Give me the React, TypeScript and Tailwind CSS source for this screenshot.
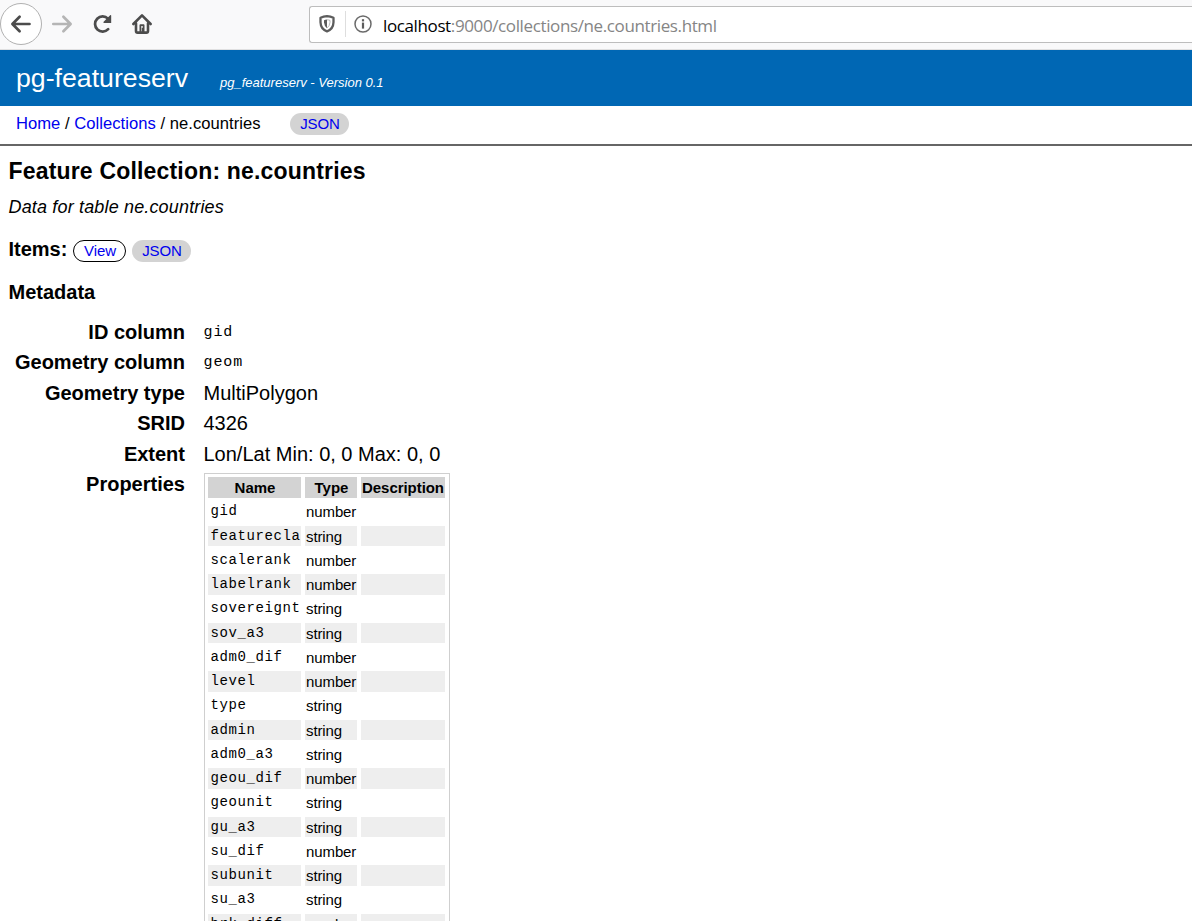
import React from 'react';

const properties: [string, string][] = [
  ['gid', 'number'],
  ['featurecla', 'string'],
  ['scalerank', 'number'],
  ['labelrank', 'number'],
  ['sovereignt', 'string'],
  ['sov_a3', 'string'],
  ['adm0_dif', 'number'],
  ['level', 'number'],
  ['type', 'string'],
  ['admin', 'string'],
  ['adm0_a3', 'string'],
  ['geou_dif', 'number'],
  ['geounit', 'string'],
  ['gu_a3', 'string'],
  ['su_dif', 'number'],
  ['subunit', 'string'],
  ['su_a3', 'string'],
  ['brk_diff', 'number'],
];

function Toolbar() {
  return (
    <div className="flex h-[50px] shrink-0 items-start border-b border-[#e0e0e1] bg-[#f9f9fa]">
      <button className="mt-[3px] flex size-[42px] items-center justify-center rounded-full border border-[#b1b1b1] bg-white">
        <svg width="22" height="20" viewBox="0 0 22 20" fill="none" stroke="#4c4c4c" strokeWidth="2.7" strokeLinecap="round" strokeLinejoin="round">
          <path d="M19.5 10H2.6M9.6 2.8L2.4 10l7.2 7.2" />
        </svg>
      </button>
      <svg className="ml-[9px] mt-[14px]" width="22" height="20" viewBox="0 0 22 20" fill="none" stroke="#b5b5b5" strokeWidth="2.7" strokeLinecap="round" strokeLinejoin="round">
        <path d="M2.3 10h17.1M12.4 2.8l7.2 7.2-7.2 7.2" />
      </svg>
      <svg className="ml-[19px] mt-[14px]" width="22" height="20" viewBox="0 0 22 20" fill="none">
        <path d="M16 4.6A7.6 7.6 0 1 0 16.2 15.2" stroke="#4c4c4c" strokeWidth="2.7" strokeLinecap="round" />
        <path d="M18.1 1.2Q19.2.6 19.2 1.8V9H12q-1.2-.2-.4-1.2Z" fill="#4c4c4c" />
      </svg>
      <svg className="ml-[18px] mt-[13px]" width="20" height="22" viewBox="0 0 20 22" fill="none" stroke="#4c4c4c" strokeWidth="2.6" strokeLinecap="round" strokeLinejoin="round">
        <path d="M1.4 11L10 2.4 18.6 11" />
        <path d="M4 10.4V18Q4 19.6 5.6 19.6H14.4Q16 19.6 16 18V10.4" />
        <path d="M8.4 19V12.2H11.6V19" strokeWidth="1.8" />
        <path d="M10.6 15.6v3" strokeWidth="1.6" />
      </svg>
      <div className="ml-[157px] mt-[6px] flex h-[37px] flex-1 items-start rounded-l-[3px] border border-r-0 border-[#bdbdbd] bg-white">
        <svg className="ml-[9px] mt-[8px]" width="16" height="18" viewBox="0 0 16 18" fill="none">
          <path d="M8 1.2Q11.5 1.4 14.5 2.7V7.2Q14.3 14 8 16.4 1.7 14 1.5 7.2V2.7Q4.5 1.4 8 1.2Z" stroke="#5c5c5c" strokeWidth="2.3" strokeLinejoin="round" />
          <path d="M8 4.6Q6.4 4.7 5 5.2V7.3Q5.2 11.2 8 13.2Z" fill="#5c5c5c" />
          <path d="M8 4.8Q9.6 4.8 11 5.4V7.3Q10.8 11 8 13" stroke="#9a9a9a" strokeWidth=".7" />
        </svg>
        <span className="ml-[10px] mt-[4px] h-[26px] w-px bg-[#dedede]" />
        <svg className="ml-[8px] mt-[8px]" width="18" height="18" viewBox="0 0 18 18" fill="none">
          <circle cx="9" cy="9" r="8" stroke="#6a6a6a" strokeWidth="1.5" />
          <rect x="7.9" y="4.2" width="2.2" height="2.2" fill="#5c5c5c" />
          <rect x="7.9" y="7.6" width="2.2" height="6" fill="#5c5c5c" />
        </svg>
        <div className="ml-[11px] mt-[7px] whitespace-nowrap font-['Open_Sans','Noto_Sans',sans-serif] text-[17px] leading-[24px] tracking-[-0.38px] text-[#858585]">
          <span className="text-black">localhost</span>:9000/collections/ne.countries.html
        </div>
      </div>
    </div>
  );
}

function Meta({ label, children, mono = false }: { label: string; children: React.ReactNode; mono?: boolean }) {
  return (
    <div className="flex h-[30.47px]">
      <div className="w-[185px] text-right text-[20px] font-bold leading-[30px]">{label}</div>
      <div
        className={
          mono
            ? "ml-[18.5px] font-['Liberation_Mono',monospace] text-[15px] leading-[31.5px] tracking-[0.9px]"
            : 'ml-[18.5px] text-[20px] leading-[30px]'
        }
      >
        {children}
      </div>
    </div>
  );
}

function PropertyTable() {
  return (
    <div className="mt-[4px] ml-[19px] w-[246px] border border-[#cfcfcf] px-[3px] pt-[3px] text-[15px]">
      <div className="mb-[3.2px] flex h-[21px] gap-[4px] text-center font-bold leading-[21px]">
        <div className="w-[93px] bg-[#d3d3d3] pl-px">Name</div>
        <div className="w-[52px] bg-[#d3d3d3] pl-px">Type</div>
        <div className="w-[84px] bg-[#d3d3d3] tracking-[-0.05px]">Description</div>
      </div>
      {properties.map(([name, type], i) => {
        const bg = i % 2 ? 'bg-[#eeeeee]' : 'bg-white';
        return (
          <div key={name} className="flex h-[24.25px] gap-[4px] leading-[21px]">
            <div className={`h-[20.5px] w-[93px] pl-[2.5px] font-['Liberation_Mono',monospace] text-[14px] leading-[21.5px] tracking-[0.6px] ${bg}`}>{name}</div>
            <div className={`h-[20.5px] w-[52px] pl-px tracking-[-0.1px] ${bg}`}>{type}</div>
            <div className={`h-[20.5px] w-[84px] ${bg}`} />
          </div>
        );
      })}
    </div>
  );
}

export default function App() {
  return (
    <div className="flex h-[921px] w-[1192px] flex-col overflow-hidden bg-white font-['Liberation_Sans',Arial,sans-serif] text-black">
      <Toolbar />
      <header className="flex h-[56px] shrink-0 bg-[#0067b4] text-white">
        <div className="ml-[16px] mt-[12px] w-[204px] text-[26.7px] leading-[32px]">pg-featureserv</div>
        <div className="mt-[24px] text-[13px] italic leading-[17px]">pg_featureserv - Version 0.1</div>
      </header>
      <nav className="flex h-[40px] shrink-0 border-b-2 border-[#666666]">
        <div className="ml-[16px] mt-[7px] w-[274px] whitespace-pre text-[16.6px] leading-[21px] tracking-[0.03px]">
          <a className="text-[#0000ee]">Home</a> / <a className="text-[#0000ee]">Collections</a> / ne.countries
        </div>
        <a className="mt-[7px] h-[22px] w-[59px] rounded-full bg-[#d3d3d3] pl-px text-center text-[15px] leading-[22px] tracking-[-0.1px] text-[#0000ee]">JSON</a>
      </nav>
      <main className="flex flex-col">
        <h1 className="ml-[8.5px] mt-[11px] text-[23px] font-bold leading-[28px] tracking-[0.18px]">Feature Collection: ne.countries</h1>
        <p className="ml-[8.5px] mt-[11px] text-[18px] italic leading-[22px] tracking-[0.16px]">Data for table ne.countries</p>
        <div className="mt-[22px] flex h-[22px]">
          <h2 className="ml-[8.5px] w-[64.5px] text-[20px] font-bold leading-[18px]">Items:</h2>
          <a className="h-[22px] w-[53px] rounded-full border border-black pl-px text-center text-[15px] leading-[20px] tracking-[-0.1px] text-[#0000ee]">View</a>
          <a className="ml-[6px] h-[22px] w-[59px] rounded-full bg-[#d3d3d3] pl-px text-center text-[15px] leading-[22px] tracking-[-0.1px] text-[#0000ee]">JSON</a>
        </div>
        <h2 className="ml-[8.5px] mt-[18px] text-[20px] font-bold leading-[24px]">Metadata</h2>
        <section className="mt-[12.75px]">
          <Meta label="ID column" mono>gid</Meta>
          <Meta label="Geometry column" mono>geom</Meta>
          <Meta label="Geometry type">MultiPolygon</Meta>
          <Meta label="SRID">4326</Meta>
          <Meta label="Extent">Lon/Lat Min: 0, 0 Max: 0, 0</Meta>
          <div className="flex items-start">
            <div className="w-[185px] text-right text-[20px] font-bold leading-[30px]">Properties</div>
            <PropertyTable />
          </div>
        </section>
      </main>
    </div>
  );
}
